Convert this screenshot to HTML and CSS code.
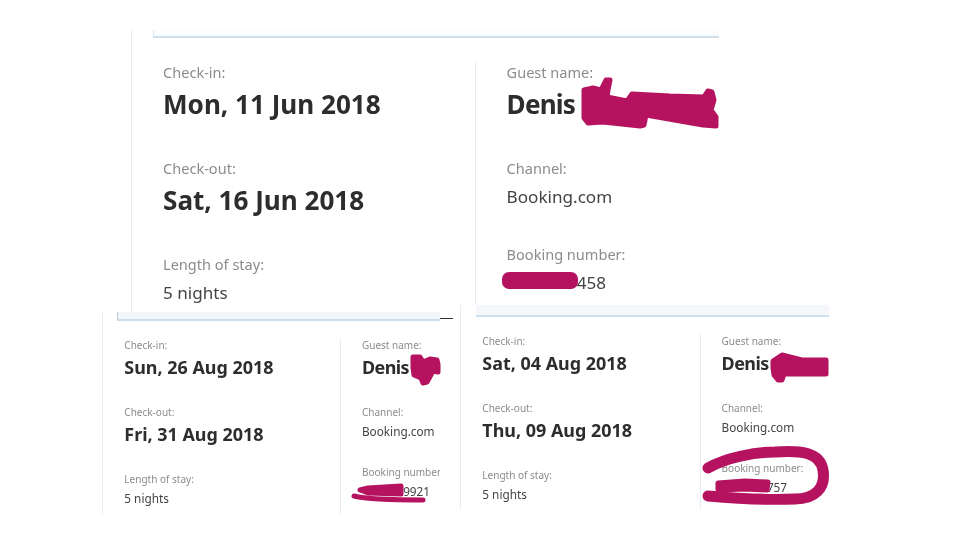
FILE: index.html
```html
<!DOCTYPE html>
<html lang="en">
<head>
<meta charset="utf-8">
<title>Booking details</title>
<link rel="stylesheet" href="styles.css">
</head>
<body>
<main class="stage">
  <section class="shot shot-a">
    <div class="strip"></div>
    <div class="columns">
      <div class="col">
        <div class="field"><p class="label">Check-in:</p><p class="big">Mon, 11 Jun 2018</p></div>
        <div class="field"><p class="label">Check-out:</p><p class="big">Sat, 16 Jun 2018</p></div>
        <div class="field"><p class="label">Length of stay:</p><p class="small">5 nights</p></div>
      </div>
      <div class="col col-right">
        <div class="field"><p class="label">Guest name:</p><p class="big name">Denis</p></div>
        <div class="field short"><p class="label">Channel:</p><p class="small">Booking.com</p></div>
        <div class="field"><p class="label">Booking number:</p><p class="small digits">458</p></div>
      </div>
    </div>
  </section>

  <section class="shot shot-b">
    <div class="strip"></div>
    <div class="columns">
      <div class="col">
        <div class="field"><p class="label">Check-in:</p><p class="big">Sun, 26 Aug 2018</p></div>
        <div class="field"><p class="label">Check-out:</p><p class="big">Fri, 31 Aug 2018</p></div>
        <div class="field"><p class="label">Length of stay:</p><p class="small">5 nights</p></div>
      </div>
      <div class="col col-right">
        <div class="field"><p class="label">Guest name:</p><p class="big name">Denis</p></div>
        <div class="field short"><p class="label">Channel:</p><p class="small">Booking.com</p></div>
        <div class="field"><p class="label">Booking number:</p><p class="small digits">9921</p></div>
      </div>
    </div>
  </section>

  <section class="shot shot-c">
    <div class="strip"></div>
    <div class="columns">
      <div class="col">
        <div class="field"><p class="label">Check-in:</p><p class="big">Sat, 04 Aug 2018</p></div>
        <div class="field"><p class="label">Check-out:</p><p class="big">Thu, 09 Aug 2018</p></div>
        <div class="field"><p class="label">Length of stay:</p><p class="small">5 nights</p></div>
      </div>
      <div class="col col-right">
        <div class="field"><p class="label">Guest name:</p><p class="big name">Denis</p></div>
        <div class="field short"><p class="label">Channel:</p><p class="small">Booking.com</p></div>
        <div class="field"><p class="label">Booking number:</p><p class="small digits">757</p></div>
      </div>
    </div>
  </section>

  <div class="dash"></div>

  <svg class="ink" viewBox="0 0 960 540" width="960" height="540" aria-hidden="true">
    <polygon class="fill" points="584,90 593,88 601,90 606,80 610,80 608,90 607,97 627,101 632,94 670,96 704,97 708,91 712,92 714,100 711,110 716,117 716,126 703,125 646,115 644,125 640,126 603,122 588,123 584,118"/>
    <rect class="solid" x="502" y="272" width="76" height="17" rx="7"/>
    <polygon class="fill" points="413,357 420,357 423,362 430,359 437,360 438,364 438,372 433,371 427,382 423,383 421,378 414,375 413,368"/>
    <polygon class="fill" points="360,490 368,488 401,486 401,494 368,493"/>
    <path class="line thin" d="M354 496 Q370 500 423 500"/>
    <polygon class="fill" points="773,361 782,355 802,360 826,360 826,374 784,374 782,380 778,380 774,375 773,368"/>
    <polygon class="fill" points="718,483 745,481 768,482 767,490 745,489 718,490"/>
    <path class="line thick" d="M708 468 C725 458 755 452 775 452 C800 450 820 452 823 470 C826 488 815 499 795 499 C770 500 730 498 708 496"/>
  </svg>
</main>
</body>
</html>
```
FILE: styles.css
```css
* { box-sizing: border-box; }
html, body { margin: 0; padding: 0; background: #fff; }
p { margin: 0; }

.stage {
  position: relative;
  width: 960px;
  height: 540px;
  overflow: hidden;
  background: #fff;
  font-family: "Noto Sans", "Open Sans", sans-serif;
  color: #333;
  filter: blur(0.35px);
}

/* Each pasted screenshot is a window on a free canvas */
.shot {
  position: absolute;
  overflow: hidden;
  display: flex;
  flex-direction: column;
  background: #fff;
  border-left: 1px solid #e9edf1;
  white-space: nowrap;
}
.shot-a { left: 131px; top: 30px; width: 588px; height: 286px; font-size: 16px; }
.shot-b { left: 102px; top: 312px; width: 338px; height: 203px; font-size: 11px; }
.shot-c { left: 460px; top: 305px; width: 369px; height: 205px; font-size: 11px; }

.strip {
  flex: none;
  height: 8px;
  margin-left: 21px;
  background: #fbfcfe;
  border-left: 1px solid #dbe6ef;
  border-bottom: 2px solid #cfdeeb;
}
.shot-b .strip { height: 9px; margin-left: 14px; background: #f2f6fa; border-left-color: #b9cbd8; }
.shot-c .strip { height: 12px; margin-left: 15px; background: #f5f7fb; border-left: 0; }

.columns {
  flex: 1;
  display: grid;
  grid-template-columns: 21.45em 1fr;
  padding-top: 24px;
}
.shot-b .columns { padding-top: 17px; grid-template-columns: 21.55em 1fr; }
.shot-c .columns { padding-top: 17px; grid-template-columns: 21.7em 1fr; }

.col { padding-left: 1.94em; }
.col-right {
  border-left: 1px solid #e9edf1;
  padding-left: 1.9em;
}

.field { height: 6em; }
.field.short { height: 5.375em; }
.shot-b .field, .shot-c .field { height: 6.1em; }
.shot-b .field.short, .shot-c .field.short { height: 5.45em; }

.label {
  height: 1.5em;
  font-size: 0.91em;
  line-height: 1.5em;
  color: #8c8c8c;
}
.big {
  margin-top: 0.17em;
  font-size: 1.63em;
  line-height: 1.3em;
  font-weight: 700;
  color: #2d2d2d;
}
.name { letter-spacing: -0.03em; }
.small {
  margin-top: 0.35em;
  font-size: 1.07em;
  line-height: 1.3em;
  color: #444;
}
.digits { padding-left: 4.1em; }
.shot-b .digits { padding-left: 3.5em; }
.shot-c .digits { padding-left: 3.85em; }

.dash {
  position: absolute;
  left: 440px;
  top: 318px;
  width: 13px;
  height: 1px;
  background: #333;
}

.ink { position: absolute; left: 0; top: 0; }
.ink .fill { fill: #b5135f; stroke: #b5135f; stroke-width: 5; stroke-linejoin: round; }
.ink .solid { fill: #b5135f; }
.ink .line { fill: none; stroke: #b5135f; stroke-linecap: round; }
.ink .thin { stroke-width: 5; }
.ink .thick { stroke-width: 11; }
```
